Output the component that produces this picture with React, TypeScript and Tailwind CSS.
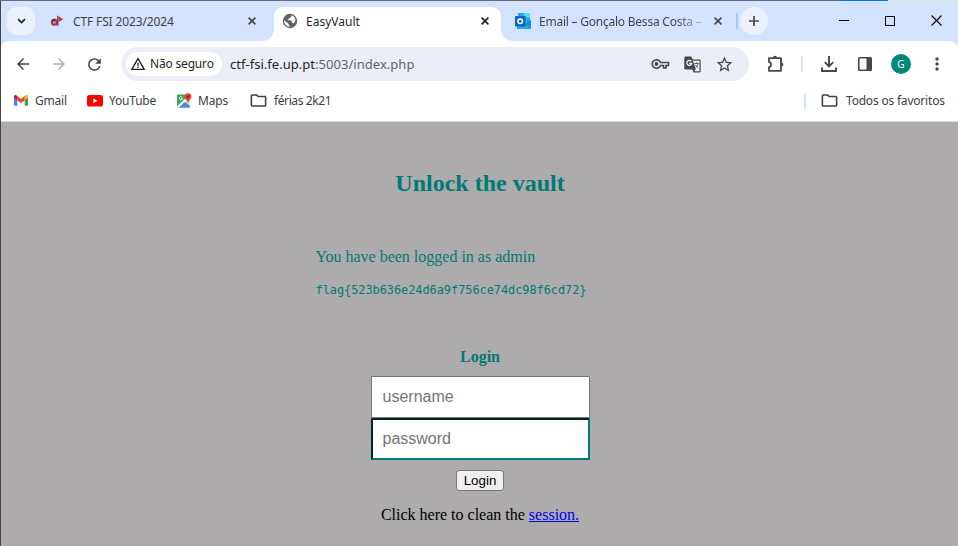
import React from "react";
import {
  MdArrowBack,
  MdArrowForward,
  MdRefresh,
  MdWarningAmber,
  MdStarOutline,
  MdMoreVert,
  MdOutlineFolder,
} from "react-icons/md";

const ui = "font-['Noto_Sans','Open_Sans',sans-serif]";

function CloseIcon({ className }: { className: string }) {
  return (
    <svg viewBox="0 0 8 8" width="8" height="8" className={className}>
      <path d="M.6.6l6.8 6.8M7.4.6L.6 7.4" stroke="currentColor" strokeWidth="1.6" fill="none" />
    </svg>
  );
}

function GlobeIcon() {
  return (
    <svg viewBox="0 0 16 16" width="16" height="16" className="shrink-0">
      <circle cx="8" cy="8" r="7.2" fill="#5f6368" />
      <path d="M8.800 2.300C10 3 9.600 4.300 8.300 4.500c-1 .2-.8 1.300-1.800 1.500-1 .2-.8 1.200.2 1.300 1.800 0 3.200.3 3.200 1.600 0 1.200 1.400.7 1.400 1.900l2-2.700C13.800 4.800 11.500 2.500 8.800 2.300z" fill="#fff" />
      <path d="M2.200 7.200l4 3.200c.8.500.2 1.300.8 1.700.6.400.8.800.6 1.600C4.300 13.500 2 11 2.200 7.200z" fill="#fff" />
    </svg>
  );
}

function CtfIcon() {
  return (
    <svg viewBox="0 0 14 12" width="14" height="12" className="shrink-0">
      <circle cx="4.400" cy="7.200" r="3.500" fill="#a8323f" />
      <path d="M.9 7a3.500 3.500 0 0 1 5-3L3.500 6.800z" fill="#55404a" />
      <path d="M2.700 6.600h3.200l-.6 2H3.300z" fill="#e3a5ad" />
      <path d="M7.800.8v9.900" stroke="#6b3a44" strokeWidth="1.300" />
      <path d="M8.500 1.300L13.400 4.200 8.500 6.900z" fill="#cb3344" />
    </svg>
  );
}

function OutlookIcon() {
  return (
    <svg viewBox="0 0 16 16" width="16" height="16" className="shrink-0">
      <rect x="3" y="0" width="12" height="10" fill="#28a8ea" />
      <rect x="9" y="0" width="6" height="4.5" fill="#50d9ff" />
      <rect x="3" y="4" width="6" height="6" fill="#0364b8" />
      <path d="M2 7l7 4 7-4v9H2z" fill="#28a8ea" />
      <path d="M16 7v8.5L9 11z" fill="#1490df" />
      <rect x="0" y="3" width="10.500" height="10.500" rx=".8" fill="#0f67bd" />
      <circle cx="5.200" cy="8.200" r="2.300" fill="none" stroke="#fff" strokeWidth="1.500" />
    </svg>
  );
}

function GmailIcon() {
  return (
    <svg viewBox="0 0 14 11" width="14" height="11" className="shrink-0">
      <path d="M0 2v7.8c0 .6.4 1 1 1h2.3V4.5z" fill="#4285f4" />
      <path d="M14 2v7.8c0 .6-.4 1-1 1h-2.3V4.5z" fill="#34a853" />
      <path d="M10.7 1.2v4L14 2.8V1.6C14 .2 12.500-.3 11.500.5z" fill="#fbbc04" />
      <path d="M3.3 5.200V1.100L7 3.900l3.700-2.800v4.100L7 8z" fill="#ea4335" />
      <path d="M0 1.600v1.200l3.300 2.400v-4L2.500.5C1.500-.3 0 .2 0 1.600z" fill="#c5221f" />
    </svg>
  );
}

function YouTubeIcon() {
  return (
    <svg viewBox="0 0 16 12" width="16" height="12" className="shrink-0">
      <rect width="16" height="11.500" rx="2.600" fill="#f00" />
      <path d="M6.300 3.400l4.300 2.400-4.300 2.400z" fill="#fff" />
    </svg>
  );
}

function MapsIcon() {
  return (
    <svg viewBox="0 0 15 15" width="15" height="15" className="shrink-0">
      <rect x="0" y="1.500" width="13" height="13" rx="1" fill="#34a853" />
      <path d="M13 4.500v9L8.500 9z" fill="#dadce0" />
      <path d="M0 13.300L9.300 4.500l1.500 2.700L2.500 14.500H1a1 1 0 0 1-1-1.200z" fill="#f4f5f6" />
      <path d="M2 14.500L7.500 9.300l5.300 5.200z" fill="#4285f4" />
      <path d="M5.500 5.200H4m1.500 0a1.600 1.600 0 1 1-.6-1.200" stroke="#fff" strokeWidth=".9" fill="none" />
      <path d="M11 .2a3.500 3.500 0 0 1 3.500 3.600C14.500 6.300 11.500 7 11 10.500 10.500 7 7.500 6.300 7.500 3.800A3.500 3.500 0 0 1 11 .2z" fill="#ea4335" />
      <circle cx="11" cy="3.700" r="1.300" fill="#8c1d18" />
    </svg>
  );
}

function KeyIcon() {
  return (
    <svg viewBox="0 0 19 12" width="19" height="12" fill="none" stroke="#474747" strokeWidth="1.600">
      <path d="M9.500 4.500a4.300 4.300 0 1 0 0 3H12.500v2.500h2.500V7.500h2.500v-3z" />
      <circle cx="5.400" cy="6" r="1.900" fill="#474747" stroke="none" />
    </svg>
  );
}

function TranslateIcon() {
  return (
    <svg viewBox="0 0 17 17" width="17" height="17">
      <path d="M1.500.5h6l1 3h7A1.200 1.200 0 0 1 16.700 4.700v10.600a1.200 1.200 0 0 1-1.200 1.200H9.500l-1-3h-7A1.200 1.200 0 0 1 .3 12.300V1.700A1.200 1.200 0 0 1 1.500.5z" fill="#474747" />
      <path d="M8.900 4.700h6.600v10.600h-4.800l1-2.300z" fill="#edf0fa" />
      <path d="M7.300 5.300a2.500 2.500 0 1 0 .5 2.100H5.400" stroke="#fff" strokeWidth="1.200" fill="none" />
      <path d="M10.300 7.500h4.800M12.700 6.300v1.200M14.200 7.700c-.4 1.700-1.500 3-2.800 3.800M11.500 8.800c.5 1.300 1.500 2.300 2.700 3" stroke="#555" strokeWidth=".9" fill="none" />
    </svg>
  );
}

function PuzzleIcon() {
  return (
    <svg viewBox="0 0 18 18" width="18" height="18">
      <path d="M2 3.200h12V15.800H2V12.200c2.700-.3 2.700-5.100 0-5.400z" fill="none" stroke="#474747" strokeWidth="1.800" strokeLinejoin="round" />
      <path d="M6 2.800a2 2 0 0 1 4 0zM14.300 7.500a2.100 2.100 0 0 1 0 4.200z" fill="#474747" />
    </svg>
  );
}

function DownloadIcon() {
  return (
    <svg viewBox="0 0 16 16" width="16" height="16" fill="none" stroke="#474747" strokeWidth="1.900">
      <path d="M8 0v10M3.800 6.200L8 10.400l4.200-4.200M1 11.500V15h14v-3.500" />
    </svg>
  );
}

function SidePanelIcon() {
  return (
    <svg viewBox="0 0 14 14" width="14" height="14">
      <rect x=".8" y=".8" width="12.400" height="12.400" rx=".8" fill="none" stroke="#474747" strokeWidth="1.600" />
      <path d="M8.500 1h5v12h-5z" fill="#474747" />
    </svg>
  );
}

function TabStrip() {
  return (
    <div className="flex h-10 bg-white text-[12px] leading-5 text-[#3c4043]">
      <div className="flex w-[273px] shrink-0 items-start rounded-br-[12px] bg-[#d3e3fd] pt-[6px] pl-[6px]">
        <div className="flex size-7 items-center justify-center rounded-[9px] bg-[#ebf2fe]">
          <svg viewBox="0 0 10 6" width="9" height="6">
            <path d="M1.200 1L5 4.700 8.800 1" stroke="#1f1f1f" strokeWidth="1.900" fill="none" />
          </svg>
        </div>
        <div className="flex h-7 flex-1 items-center pl-[15px]">
          <CtfIcon />
          <span className="ml-[9px] w-[175px] pt-[2px] tracking-[-0.14px] whitespace-nowrap">CTF FSI 2023/2024</span>
          <CloseIcon className="text-[#474747]" />
        </div>
      </div>
      <div className="w-[227px] shrink-0 bg-[#d3e3fd] pt-[6px]">
        <div className="flex h-[34px] items-start rounded-t-[9px] bg-white pl-2">
          <div className="flex h-7 items-center text-[#1f1f1f]">
            <GlobeIcon />
            <span className="ml-2 w-[175px] pt-[2px] whitespace-nowrap">EasyVault</span>
            <CloseIcon className="text-[#1f1f1f]" />
          </div>
        </div>
      </div>
      <div className="flex flex-1 items-start rounded-bl-[12px] bg-[#d3e3fd] pt-[6px] pl-[14px]">
        <div className="flex h-7 items-center">
          <OutlookIcon />
          <span className="ml-2 w-[167px] bg-linear-to-r from-[#3c4043] from-82% to-[#3c4043]/10 bg-clip-text pt-[2px] tracking-[-0.23px] whitespace-nowrap text-transparent">
            Email – Gonçalo Bessa Costa –
          </span>
          <CloseIcon className="ml-2 text-[#474747]" />
          <div className="ml-[14px] h-4 w-[2px] bg-[#a8c7fa]" />
        </div>
        <div className="ml-[2px] flex size-7 items-center justify-center rounded-full bg-[#ebf2fe]">
          <svg viewBox="0 0 10 10" width="10" height="10">
            <path d="M5 0v10M0 5h10" stroke="#474747" strokeWidth="1.700" />
          </svg>
        </div>
        <div className="ml-[71px] flex h-[27px] items-center text-black">
          <div className="h-px w-[10px] bg-black" />
          <div className="ml-9 size-[10px] border border-black" />
          <svg viewBox="0 0 11 11" width="11" height="11" className="ml-9">
            <path d="M.5.5l10 10M10.500.5l-10 10" stroke="#000" strokeWidth="1.100" />
          </svg>
        </div>
      </div>
    </div>
  );
}

function Toolbar() {
  return (
    <div className="flex h-[46px] items-center text-[#474747]">
      <MdArrowBack size={18} className="ml-[13px]" />
      <MdArrowForward size={18} className="ml-[18px] text-[#b0b0b0]" />
      <MdRefresh size={19} className="ml-[17px]" />
      <div className="ml-[17px] flex h-[34px] w-[628px] items-center rounded-full bg-[#ebeef7] pl-[5px]">
        <div className="flex h-6 w-[96px] items-center rounded-full bg-white pl-1">
          <MdWarningAmber size={16} className="text-[#1f1f1f]" />
          <span className="ml-1 text-[12px] tracking-[-0.18px] whitespace-nowrap text-[#1f1f1f]">Não seguro</span>
        </div>
        <div className="ml-2 w-[421px] pt-px text-[13px] tracking-[0.03px] whitespace-nowrap">
          <span className="text-[#1f1f1f]">ctf-fsi.fe.up.pt</span>
          <span className="text-[#5f6368]">:5003/index.php</span>
        </div>
        <KeyIcon />
        <div className="ml-[14px]"><TranslateIcon /></div>
        <MdStarOutline size={19} className="ml-[14px]" />
      </div>
      <div className="ml-[18px]"><PuzzleIcon /></div>
      <div className="ml-4 h-4 w-[2px] bg-[#d3e3fd]" />
      <div className="ml-[18px]"><DownloadIcon /></div>
      <div className="ml-[21px]"><SidePanelIcon /></div>
      <div className="ml-[19px] flex size-5 items-center justify-center rounded-full bg-[#00897b] text-[10px] text-white">G</div>
      <MdMoreVert size={20} className="ml-4" />
    </div>
  );
}

function Bookmarks() {
  return (
    <div className="flex h-[34px] items-center pb-[7px] text-[12px] tracking-[-0.2px] whitespace-nowrap text-[#3c4043]">
      <div className="ml-[13px] flex w-[73px] items-center">
        <GmailIcon />
        <span className="ml-[7px] pt-px">Gmail</span>
      </div>
      <div className="flex w-[90px] items-center">
        <YouTubeIcon />
        <span className="ml-[6px] pt-px">YouTube</span>
      </div>
      <div className="flex w-[72px] items-center">
        <MapsIcon />
        <span className="ml-[6px] pt-px">Maps</span>
      </div>
      <MdOutlineFolder size={19} />
      <span className="ml-[6px] w-[530px] pt-px tracking-[-0.4px]">férias 2k21</span>
      <div className="h-4 w-[2px] bg-[#d3e3fd]" />
      <MdOutlineFolder size={19} className="ml-[14px]" />
      <span className="ml-[7px] pt-px">Todos os favoritos</span>
    </div>
  );
}

function VaultPage() {
  return (
    <main className="flex flex-1 flex-col items-center bg-[#adabab] pl-px font-['Liberation_Serif',serif] text-base text-[#007a74]">
      <h1 className="mt-[45px] text-[24px] leading-8 font-bold">Unlock the vault</h1>
      <div className="mt-12 w-[329px]">
        <p className="leading-5">You have been logged in as admin</p>
        <pre className="mt-[14px] font-['DejaVu_Sans_Mono',monospace] text-[11.85px] leading-[18px]">
          flag{"{"}523b636e24d6a9f756ce74dc98f6cd72{"}"}
        </pre>
      </div>
      <h2 className="mt-12 leading-5 font-bold">Login</h2>
      <form className="mt-[9px] flex flex-col items-center font-['Liberation_Sans',sans-serif]">
        <input
          placeholder="username"
          className="h-[42px] w-[219px] rounded-[1px] border border-[#767676] bg-white px-[11px] placeholder:text-[#757575]"
        />
        <input
          placeholder="password"
          className="h-[42px] w-[219px] border-2 border-t-[#002423] border-r-[#007a74] border-b-[#007a74] border-l-[#002423] bg-white px-[10px] placeholder:text-[#757575]"
        />
        <button
          type="button"
          className="mt-[10px] h-[21px] w-12 rounded-[3px] border border-[#767676] bg-[#efefef] text-[13.333px] leading-[18px] text-black"
        >
          Login
        </button>
      </form>
      <p className="mt-[14px] leading-5 text-black">
        Click here to clean the <a className="text-[#0000ee] underline">session.</a>
      </p>
    </main>
  );
}

export default function App() {
  return (
    <div className="flex h-[546px] w-[958px] flex-col overflow-hidden">
      <div className="flex h-px shrink-0">
        <div className="flex-1 bg-[#686b78]" />
        <div className="w-12 bg-[#0078d7]" />
        <div className="w-[70px] bg-[#e3e3e3]" />
      </div>
      <div className="flex flex-1 flex-col border-l border-[#454545]">
        <div className={ui}>
          <TabStrip />
          <div className="bg-[#d3e3fd]">
            <div className="h-[81px] rounded-t-[8px] border-b border-[#dedfe1] bg-white">
              <Toolbar />
              <Bookmarks />
            </div>
          </div>
        </div>
        <VaultPage />
      </div>
    </div>
  );
}
